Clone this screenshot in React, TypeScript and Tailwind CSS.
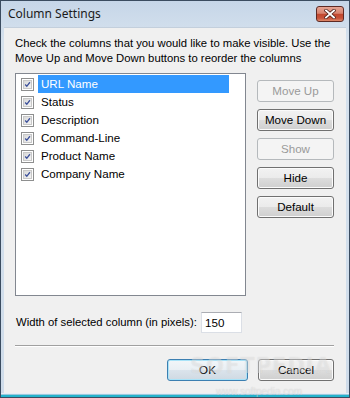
import React from "react";

const items = ["URL Name", "Status", "Description", "Command-Line", "Product Name", "Company Name"];

function Check() {
  return (
    <div className="w-[13px] h-[13px] border border-[#8e8f8f] bg-white p-[1px] shrink-0">
      <div className="w-full h-full bg-[linear-gradient(135deg,#d8d8d8,#f4f4f4)] border border-[#c8c8c8] flex items-center justify-center">
        <svg width="9" height="9" viewBox="0 0 9 9">
          <path d="M1.5 4.6 L3.6 6.8 L7.6 1.6" fill="none" stroke="#3d519b" strokeWidth="1.7" />
        </svg>
      </div>
    </div>
  );
}

function Btn({ label, disabled }: { label: string; disabled?: boolean }) {
  if (disabled) {
    return (
      <div className="w-[77px] h-[22px] rounded-[3px] border border-[#b5b9bc] bg-[#f4f4f4] flex items-center justify-center text-[#9a9a9a]">
        {label}
      </div>
    );
  }
  return (
    <div className="w-[77px] h-[22px] rounded-[3px] border border-[#707070] bg-[linear-gradient(#f2f2f2_0%,#ebebeb_50%,#dddddd_50%,#cfcfcf_100%)] shadow-[inset_0_0_0_1px_#fbfbfb] flex items-center justify-center text-black">
      {label}
    </div>
  );
}

export default function App() {
  return (
    <div className="relative w-[350px] h-[398px] flex flex-col border border-[#3b4c60] bg-[linear-gradient(#c6d6e8,#d6e2ee_40px,#cfdcea)] font-['Liberation_Sans',Arial,sans-serif] text-[11.6px] text-black overflow-hidden">
      {/* title bar */}
      <div className="h-[26px] flex items-center justify-between pl-[7px] pr-[5px] shrink-0">
        <span className="font-['Noto_Sans',sans-serif] text-[12px] text-[#1b1b1b]">Column Settings</span>
        <div className="w-[28px] h-[16px] rounded-[3px] border border-[#5e2a24] bg-[linear-gradient(#e6a594_0%,#d8836f_45%,#c1472e_52%,#c8533a_80%,#de8a6b_100%)] flex items-center justify-center">
          <svg width="12" height="10" viewBox="0 0 12 10">
            <path d="M2 1.5 L10 8.5 M10 1.5 L2 8.5" stroke="#4a1c16" strokeWidth="3.4" strokeLinecap="square" />
            <path d="M2 1.5 L10 8.5 M10 1.5 L2 8.5" stroke="#ffffff" strokeWidth="1.9" strokeLinecap="square" />
          </svg>
        </div>
      </div>
      {/* client */}
      <div className="relative flex-1 mx-[3px] bg-[#f0f0f0] border-t border-[#c3cfdc] pl-[11px] pr-[11px] pt-[8px] flex flex-col">
        <p className="leading-[15px] text-[11.3px] whitespace-nowrap">
          Check the columns that you would like to make visible. Use the
          <br />
          Move Up and Move Down buttons to reorder the columns
        </p>
        <div className="flex mt-[7px]">
          <div className="w-[231px] h-[223px] border border-[#828790] bg-white pt-[1px] flex flex-col">
            {items.map((it, i) => (
              <div key={it} className="h-[18px] flex items-center pl-[5px]">
                <Check />
                {i === 0 ? (
                  <div className="ml-[4px] w-[191px] h-[18px] bg-[#3399ff] text-white flex items-center pl-[3px]">{it}</div>
                ) : (
                  <div className="ml-[4px] h-[18px] flex items-center pl-[3px]">{it}</div>
                )}
              </div>
            ))}
          </div>
          <div className="ml-[11px] mt-[7px] flex flex-col gap-[7px]">
            <Btn label="Move Up" disabled />
            <Btn label="Move Down" />
            <Btn label="Show" disabled />
            <Btn label="Hide" />
            <Btn label="Default" />
          </div>
        </div>
        <div className="flex items-center mt-[16px]">
          <div className="w-[186px] text-[11.3px] pl-[1px] whitespace-nowrap">Width of selected column (in pixels):</div>
          <div className="w-[41px] h-[21px] bg-white border border-[#dbdfe6] border-t-[#abadb3] flex items-center pl-[3px]">150</div>
        </div>
        <div className="mt-[12px] mr-[1px] h-[2px] border-t border-[#a0a0a0] border-b border-b-white" />
        <div className="mt-[12px] flex justify-end gap-[10px] pr-[1px]">
          <div className="w-[81px] h-[22px] rounded-[3px] border border-[#3c7fb1] bg-[linear-gradient(#f2f6f9_0%,#e9eff4_50%,#dbe4ec_50%,#cfd9e2_100%)] shadow-[inset_0_0_0_1px_#a9e3f8] flex items-center justify-center">OK</div>
          <div className="w-[76px] h-[22px] rounded-[3px] border border-[#707070] bg-[linear-gradient(#f2f2f2_0%,#ebebeb_50%,#dddddd_50%,#cfcfcf_100%)] shadow-[inset_0_0_0_1px_#fbfbfb] flex items-center justify-center">Cancel</div>
        </div>
        <div className="pointer-events-none absolute left-[186px] top-[328px] leading-none text-[21px] font-bold tracking-[1px] text-white/30 [text-shadow:0_0_1px_rgba(150,150,150,0.25)] font-['DejaVu_Sans',sans-serif]">SOFTPEDIA</div>
        <div className="pointer-events-none absolute left-[212px] top-[359px] leading-none text-[10px] text-white/40 [text-shadow:0_0_1px_rgba(120,120,120,0.3)]">www.softpedia.com</div>
      </div>
      {/* bottom frame */}
      <div className="h-[4px] shrink-0 flex flex-col">
        <div className="h-[1px] bg-[#e4eef7]" />
        <div className="h-[1px] bg-[#9cc9dc]" />
        <div className="h-[2px] bg-[#23b3cc]" />
      </div>
    </div>
  );
}
